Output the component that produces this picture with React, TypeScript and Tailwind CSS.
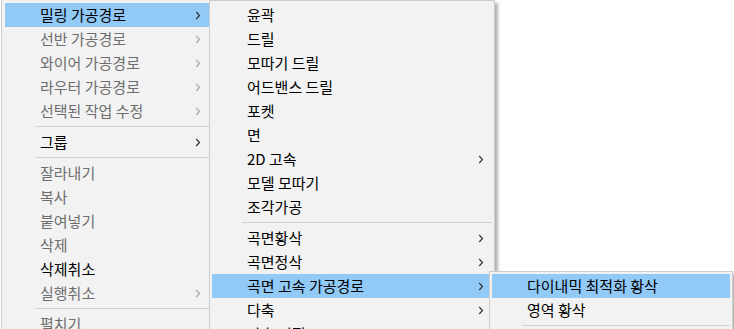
import React from "react";

type Entry =
  | { kind: "item"; label: string; disabled?: boolean; arrow?: boolean; active?: boolean }
  | { kind: "sep" };

const it = (label: string, opts: { disabled?: boolean; arrow?: boolean; active?: boolean } = {}): Entry => ({
  kind: "item",
  label,
  ...opts,
});
const sep: Entry = { kind: "sep" };

function Chevron({ disabled }: { disabled?: boolean }) {
  return (
    <svg width="6" height="9" viewBox="0 0 6 9" className="shrink-0">
      <path
        d="M1.2 1 L4.5 4.5 L1.2 8"
        fill="none"
        stroke={disabled ? "#a8a8a8" : "#333333"}
        strokeWidth="1.2"
      />
    </svg>
  );
}

function MenuRows({ entries }: { entries: Entry[] }) {
  return (
    <>
      {entries.map((e, i) =>
        e.kind === "sep" ? (
          <div key={i} className="h-[7px] pt-[3px] pl-[30px]">
            <div className="h-[1px] bg-[#d2d2d2]" />
          </div>
        ) : (
          <div
            key={i}
            className={
              "flex h-[24px] items-center justify-between pl-[35px] pr-[8px] leading-[24px] whitespace-nowrap " +
              (e.active ? "bg-[#91c9f7] " : "") +
              (e.disabled ? "text-[#6d6d6d]" : "text-black")
            }
          >
            <span>{e.label}</span>
            {e.arrow ? <Chevron disabled={e.disabled} /> : null}
          </div>
        )
      )}
    </>
  );
}

const menu1: Entry[] = [
  it("밀링 가공경로", { arrow: true, active: true }),
  it("선반 가공경로", { arrow: true, disabled: true }),
  it("와이어 가공경로", { arrow: true, disabled: true }),
  it("라우터 가공경로", { arrow: true, disabled: true }),
  it("선택된 작업 수정", { arrow: true, disabled: true }),
  sep,
  it("그룹", { arrow: true }),
  sep,
  it("잘라내기", { disabled: true }),
  it("복사", { disabled: true }),
  it("붙여넣기", { disabled: true }),
  it("삭제", { disabled: true }),
  it("삭제취소"),
  it("실행취소", { arrow: true, disabled: true }),
  sep,
  it("펼치기", { disabled: true }),
];

const menu2: Entry[] = [
  it("윤곽"),
  it("드릴"),
  it("모따기 드릴"),
  it("어드밴스 드릴"),
  it("포켓"),
  it("면"),
  it("2D 고속", { arrow: true }),
  it("모델 모따기"),
  it("조각가공"),
  sep,
  it("곡면황삭", { arrow: true }),
  it("곡면정삭", { arrow: true }),
  it("곡면 고속 가공경로", { arrow: true, active: true }),
  it("다축", { arrow: true }),
  it("다축 편집"),
];

const menu3: Entry[] = [
  it("다이내믹 최적화 황삭", { active: true }),
  it("영역 황삭"),
  sep,
];

export default function App() {
  return (
    <div className="relative h-[329px] w-[734px] overflow-hidden bg-white font-['Noto_Sans_CJK_KR','Noto_Sans',sans-serif] text-[15px]">
      <div className="absolute left-[1px] top-0 w-[212px] border-x border-b border-[#cccccc] bg-[#f2f2f2] px-[3px] pt-[3px]">
        <MenuRows entries={menu1} />
      </div>
      <div className="absolute left-[209px] top-0 w-[286px] border border-[#cccccc] bg-[#f2f2f2] px-[2px] pt-[2px] shadow-[3px_3px_3px_rgba(0,0,0,0.3)]">
        <MenuRows entries={menu2} />
      </div>
      <div className="absolute left-[489px] top-[271px] w-[244px] border border-[#cccccc] bg-[#f2f2f2] px-[2px] pt-[2px] pb-[24px] shadow-[3px_3px_3px_rgba(0,0,0,0.3)]">
        <MenuRows entries={menu3} />
      </div>
    </div>
  );
}
